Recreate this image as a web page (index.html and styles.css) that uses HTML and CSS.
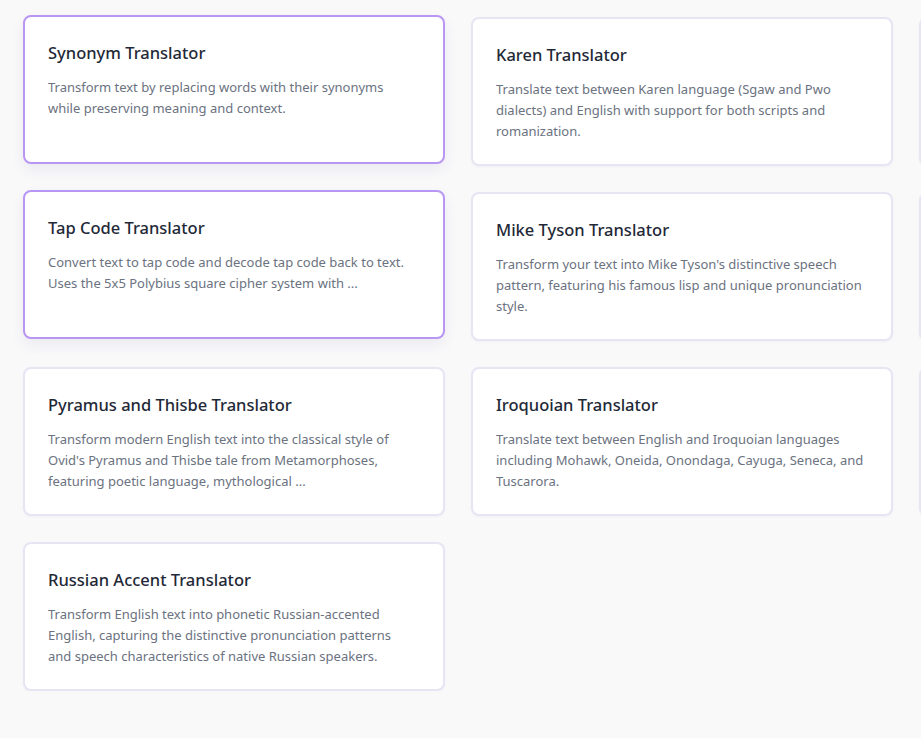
FILE: index.html
```html
<!DOCTYPE html>
<html lang="en">
<head>
<meta charset="utf-8">
<title>Translators</title>
<link rel="stylesheet" href="styles.css">
</head>
<body>
<main class="page">
  <div class="grid">
    <a class="card card--active" href="#">
      <h3 class="card-title">Synonym Translator</h3>
      <p class="card-desc">Transform text by replacing words with their synonyms while preserving meaning and context.</p>
    </a>
    <a class="card" href="#">
      <h3 class="card-title">Karen Translator</h3>
      <p class="card-desc">Translate text between Karen language (Sgaw and Pwo dialects) and English with support for both scripts and romanization.</p>
    </a>
    <div class="card card--offscreen" aria-hidden="true"></div>
    <a class="card card--active" href="#">
      <h3 class="card-title">Tap Code Translator</h3>
      <p class="card-desc">Convert text to tap code and decode tap code back to text. Uses the 5x5 Polybius square cipher system with ...</p>
    </a>
    <a class="card" href="#">
      <h3 class="card-title">Mike Tyson Translator</h3>
      <p class="card-desc">Transform your text into Mike Tyson's distinctive speech pattern, featuring his famous lisp and unique pronunciation style.</p>
    </a>
    <div class="card card--offscreen" aria-hidden="true"></div>
    <a class="card" href="#">
      <h3 class="card-title">Pyramus and Thisbe Translator</h3>
      <p class="card-desc">Transform modern English text into the classical style of Ovid's Pyramus and Thisbe tale from Metamorphoses, featuring poetic language, mythological ...</p>
    </a>
    <a class="card" href="#">
      <h3 class="card-title">Iroquoian Translator</h3>
      <p class="card-desc">Translate text between English and Iroquoian languages including Mohawk, Oneida, Onondaga, Cayuga, Seneca, and Tuscarora.</p>
    </a>
    <div class="card card--offscreen" aria-hidden="true"></div>
    <a class="card" href="#">
      <h3 class="card-title">Russian Accent Translator</h3>
      <p class="card-desc">Transform English text into phonetic Russian-accented English, capturing the distinctive pronunciation patterns and speech characteristics of native Russian speakers.</p>
    </a>
  </div>
</main>
</body>
</html>
```

FILE: styles.css
```css
* { box-sizing: border-box; }
html, body {
  margin: 0;
  padding: 0;
  background: #f9f9fa;
  overflow: hidden;
}
body {
  font-family: "Noto Sans", "Open Sans", sans-serif;
  color: #1f2937;
}
.page {
  padding: 17px 0 0 23px;
  width: 1400px;
}
.grid {
  display: grid;
  grid-template-columns: repeat(3, 422px);
  column-gap: 26px;
  row-gap: 26px;
}
.card {
  display: block;
  background: #ffffff;
  border: 2px solid #e7e5f4;
  border-radius: 8px;
  padding: 23px 27.5px 22px 23px;
  text-decoration: none;
  box-shadow: 0 1px 3px rgba(30, 20, 80, 0.04);
}
.card--offscreen {
  min-height: 149px;
}
.card--active {
  border-color: #b996f4;
  transform: translateY(-2px);
  box-shadow: 0 6px 14px rgba(60, 40, 120, 0.07);
}
.card-title {
  margin: 0 0 11px;
  font-size: 16.5px;
  line-height: 26px;
  font-weight: 500;
  color: #1f2937;
}
.card-desc {
  margin: 0;
  font-size: 13px;
  line-height: 21px;
  color: #6b7280;
}
```
